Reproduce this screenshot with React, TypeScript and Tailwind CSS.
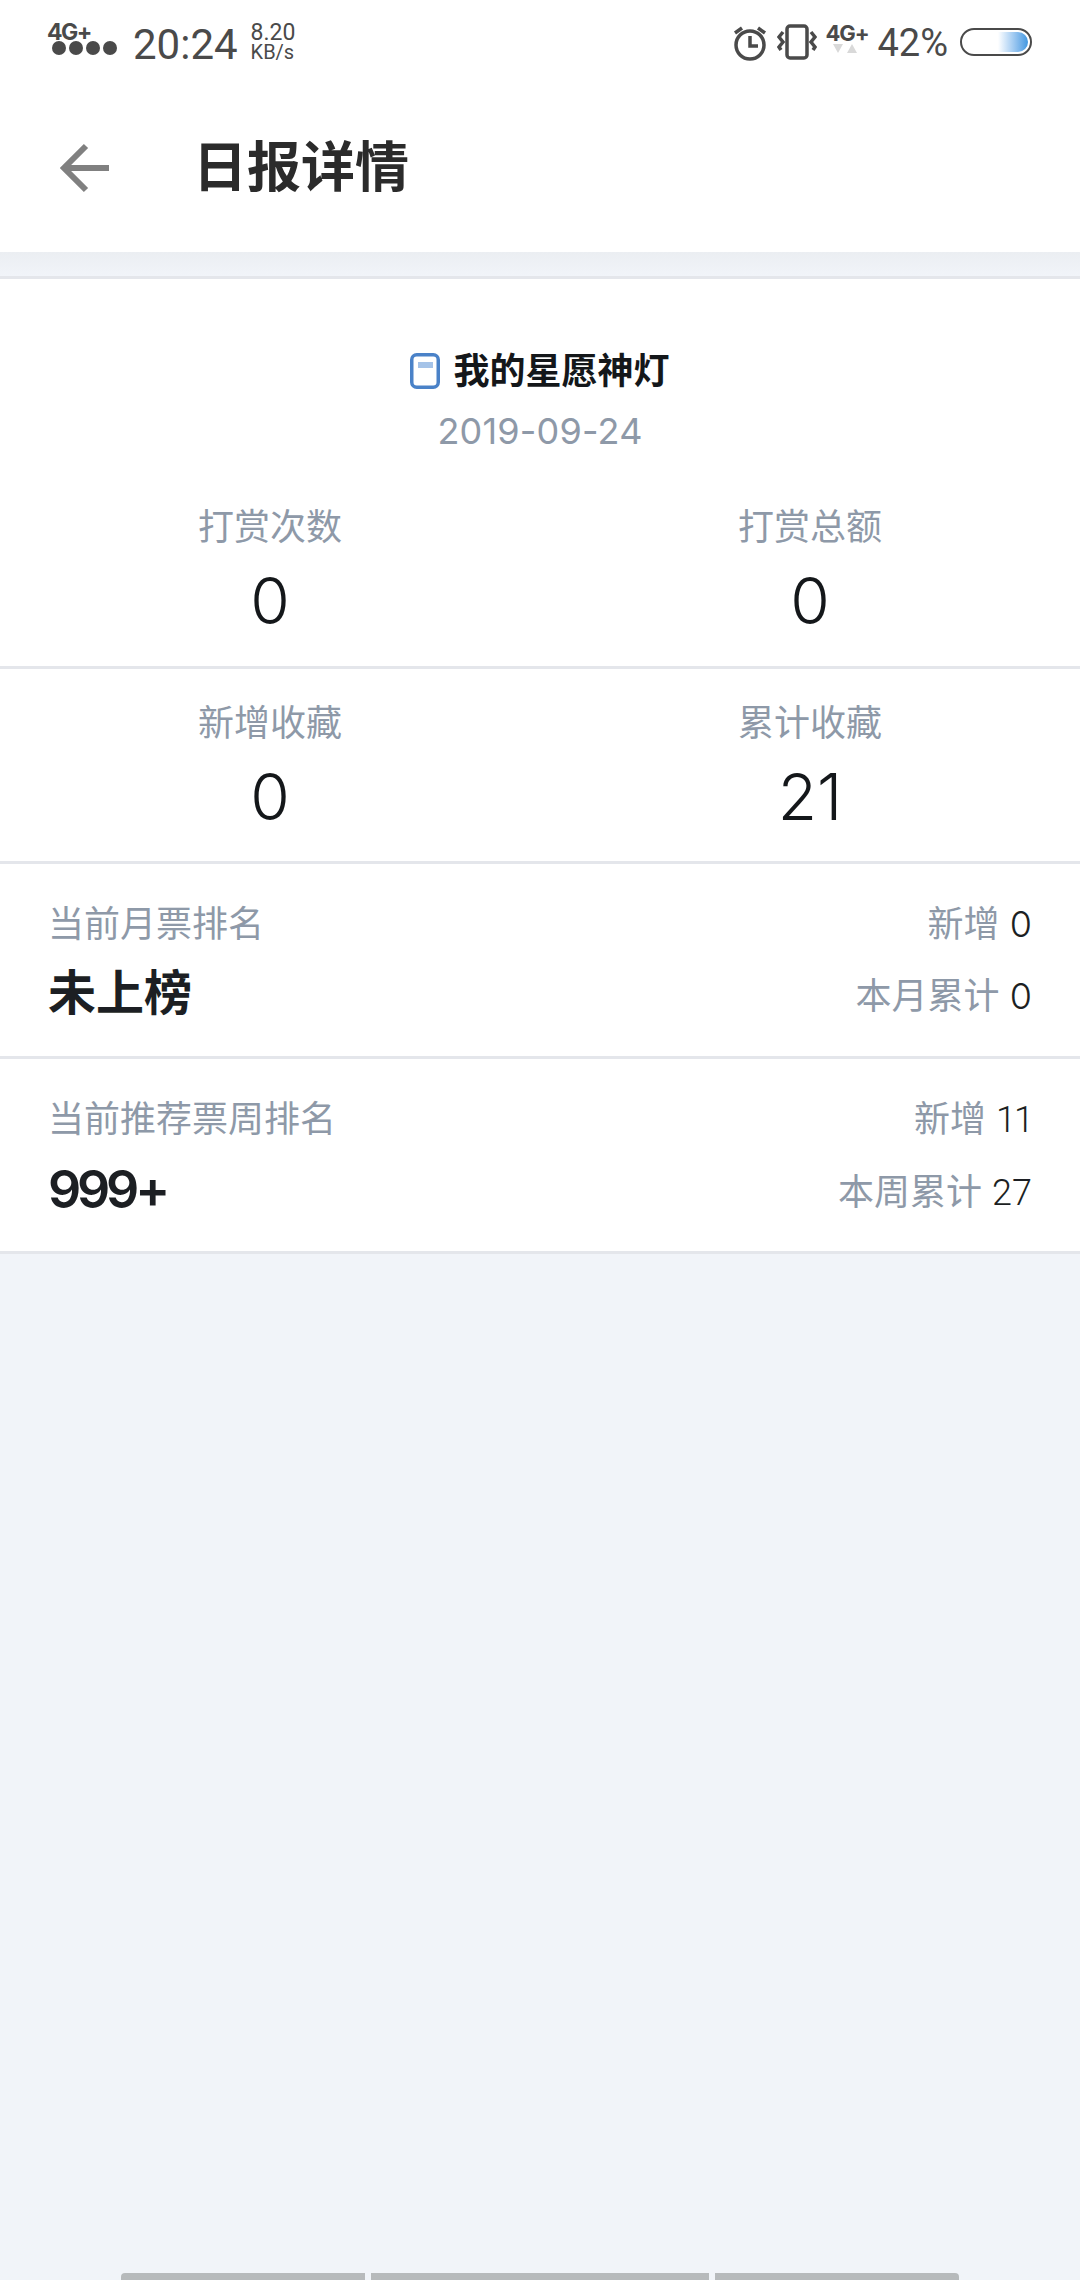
const cjk = "font-['Inter','Noto_Sans_CJK_SC',sans-serif]";

const Stat = ({ label, value }: { label: string; value: string }) => (
  <div className="flex flex-col items-center">
    <p className="text-[36px] leading-[46px] text-[#8e99a8]">{label}</p>
    <p className="mt-[15px] text-[64px] leading-[72px] font-light text-[#14171a]">{value}</p>
  </div>
);

const RankRow = ({
  label,
  rank,
  rankClass,
  addLabel,
  add,
  addClass,
  totalLabel,
  total,
  totalClass,
}: {
  label: string;
  rank: string;
  rankClass: string;
  addLabel: string;
  add: string;
  addClass: string;
  totalLabel: string;
  total: string;
  totalClass: string;
}) => (
  <div className="flex h-[195px] justify-between border-b-[3px] border-[#e4e6eb] px-[48px] pt-[37px]">
    <div>
      <p className="text-[36px] leading-[46px] text-[#8e99a8]">{label}</p>
      <p className={`leading-[62px] text-[#1c1f23] ${rankClass}`}>{rank}</p>
    </div>
    <div className="flex flex-col items-end">
      <p className="text-[36px] leading-[46px] text-[#8e99a8]">
        {addLabel} <span className={`font-light text-[#1c1f23] ${addClass}`}>{add}</span>
      </p>
      <p className="mt-[26px] text-[36px] leading-[46px] text-[#8e99a8]">
        {totalLabel} <span className={`font-light text-[#1c1f23] ${totalClass}`}>{total}</span>
      </p>
    </div>
  </div>
);

const StatusBar = () => (
  <div className="flex h-[84px] items-start justify-between pr-[48px] pl-[47px] text-[#4a4a4a]">
    <div className="flex items-start">
      <div className="mt-[23px] w-[71px]">
        <p className="text-[23px] leading-[18px] font-bold tracking-[-1.5px]">4G+</p>
        <div className="ml-[5px] flex gap-[3px]">
          <span className="size-[14px] rounded-full bg-[#4a4a4a]" />
          <span className="size-[14px] rounded-full bg-[#4a4a4a]" />
          <span className="size-[14px] rounded-full bg-[#4a4a4a]" />
          <span className="size-[14px] rounded-full bg-[#4a4a4a]" />
        </div>
      </div>
      <p className="mt-[20px] ml-[15px] font-['Roboto',sans-serif] text-[42px] leading-[50px]">20:24</p>
      <div className="mt-[22px] ml-[13px] font-['Roboto',sans-serif]">
        <p className="text-[23px] leading-[21px]">8.20</p>
        <p className="text-[20px] leading-[19px]">KB/s</p>
      </div>
    </div>
    <div className="flex items-start">
      <svg className="mt-[24px]" width="34" height="38" viewBox="0 0 34 38" fill="none" stroke="#4a4a4a" strokeWidth="3.5">
        <circle cx="17" cy="21" r="14" />
        <path d="M17 12v10h8" />
        <path d="M2 9l7-5M32 9l-7-5" />
      </svg>
      <svg className="mt-[24px] ml-[10px]" width="40" height="36" viewBox="0 0 40 36" fill="none" stroke="#4a4a4a" strokeWidth="3.5">
        <rect x="10" y="2" width="20" height="32" rx="3" />
        <path d="M6 8L2 13l4 5-4 5 2 3M34 8l4 5-4 5 4 5-2 3" />
      </svg>
      <div className="mt-[23px] ml-[8px] w-[42px]">
        <p className="text-[22px] leading-[21px] font-bold tracking-[-1px]">4G+</p>
        <svg className="ml-[8px]" width="24" height="10" viewBox="0 0 24 10" fill="#d9d9d9">
          <path d="M0 0h10L5 9zM14 9h10L19 0z" />
        </svg>
      </div>
      <p className="mt-[22px] ml-[10px] font-['Roboto',sans-serif] text-[38px] leading-[42px]">42%</p>
      <div className="mt-[28px] ml-[12px] h-[28px] w-[72px] overflow-hidden rounded-full border-[2px] border-[#4a4a4a] bg-white p-[2px]">
        <div className="ml-auto h-full w-[30px] rounded-r-full bg-gradient-to-r from-white to-[#3f97e0]" />
      </div>
    </div>
  </div>
);

export default function App() {
  return (
    <div className={`${cjk} flex h-[2280px] w-[1080px] flex-col bg-[#f1f4f9]`}>
      <div className="h-[252px] bg-white">
        <StatusBar />
        <div className="flex h-[168px] items-center pl-[59px]">
          <svg width="50" height="50" viewBox="0 0 50 50" fill="none" stroke="#808080" strokeWidth="6">
            <path d="M50 25H5M27 3L5 25l22 22" />
          </svg>
          <h1 className="ml-[84px] text-[54px] leading-[68px] font-bold text-[#2b2b2b]">日报详情</h1>
        </div>
      </div>
      <div className="h-[24px] bg-gradient-to-b from-[#ebeef2] to-[#f1f4f9]" />
      <div className="border-t-[3px] border-[#e4e6eb] bg-white">
        <div className="h-[390px] border-b-[3px] border-[#e4e6eb] pt-[69px]">
          <div className="flex items-center justify-center">
            <svg width="30" height="36" viewBox="0 0 30 36" fill="none">
              <rect x="1.75" y="1.75" width="26.5" height="32.5" rx="5" stroke="#4a82c8" strokeWidth="3.5" />
              <rect x="8" y="9" width="15" height="6" fill="#a5c3e8" />
            </svg>
            <p className="ml-[13px] text-[36px] leading-[46px] font-bold text-[#14171a]">我的星愿神灯</p>
          </div>
          <p className="mt-[14px] text-center text-[36px] leading-[46px] tracking-[0.2px] text-[#8e99a8]">2019-09-24</p>
          <div className="mt-[50px] grid grid-cols-2">
            <Stat label="打赏次数" value="0" />
            <Stat label="打赏总额" value="0" />
          </div>
        </div>
        <div className="grid h-[195px] grid-cols-2 border-b-[3px] border-[#e4e6eb] pt-[31px]">
          <Stat label="新增收藏" value="0" />
          <Stat label="累计收藏" value="21" />
        </div>
        <RankRow
          label="当前月票排名"
          rank="未上榜"
          rankClass="mt-[15px] text-[48px] font-bold"
          addLabel="新增"
          add="0"
          addClass=""
          totalLabel="本月累计"
          total="0"
          totalClass=""
        />
        <RankRow
          label="当前推荐票周排名"
          rank="999+"
          rankClass="mt-[17px] text-[52px] font-semibold tracking-[-4.2px]"
          addLabel="新增"
          add="11"
          addClass="font-['Roboto',sans-serif] tracking-[-2px]"
          totalLabel="本周累计"
          total="27"
          totalClass="font-['Roboto',sans-serif]"
        />
      </div>
      <div className="mt-auto flex justify-center gap-[6px]">
        <div className="h-[7px] w-[244px] rounded-tl-[4px] bg-[#b7babc]" />
        <div className="h-[7px] w-[338px] bg-[#b7babc]" />
        <div className="h-[7px] w-[244px] rounded-tr-[4px] bg-[#b7babc]" />
      </div>
    </div>
  );
}
